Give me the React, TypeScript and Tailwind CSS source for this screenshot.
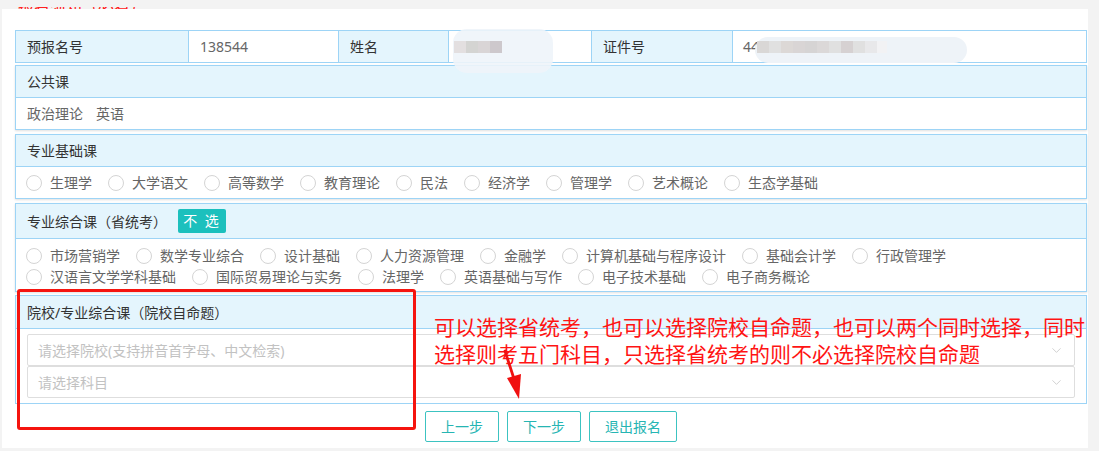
import { ChevronDown } from 'lucide-react';

const basics = ['生理学', '大学语文', '高等数学', '教育理论', '民法', '经济学', '管理学', '艺术概论', '生态学基础'];
const unified = [
    '市场营销学', '数学专业综合', '设计基础', '人力资源管理', '金融学', '计算机基础与程序设计', '基础会计学', '行政管理学',
    '汉语言文学学科基础', '国际贸易理论与实务', '法理学', '英语基础与写作', '电子技术基础', '电子商务概论',
];

function Radio({ label }: { label: string }) {
    return (
        <label className="flex items-center mr-[16px] leading-[21px]">
            <span className="w-[16px] h-[16px] rounded-full border border-[#d4d4d4] bg-white mr-[8px] shrink-0" />
            <span className="text-[#666]">{label}</span>
        </label>
    );
}

function Select({ placeholder }: { placeholder: string }) {
    return (
        <div className="h-[32px] border border-[#dedede] rounded-[2px] bg-white flex items-center justify-between pl-[10px] pr-[10px]">
            <span className="text-[#c2c2c2]">{placeholder}</span>
            <ChevronDown size={15} strokeWidth={1.3} className="text-[#c6c6c6]" />
        </div>
    );
}

export default function App() {
    return (
        <div className="w-[1099px] h-[451px] bg-[#f3f3f3] overflow-hidden text-[14px] text-[#333] font-['Noto_Sans','Noto_Sans_CJK_SC',sans-serif]">
            {/* clipped title line */}
            <div className="relative h-0">
                <div className="absolute left-[18px] top-[7px] h-[5px] overflow-hidden">
                    <div className="-mt-[11px] text-[16px] leading-[20px] text-[#ff2020] whitespace-nowrap">报名须知（必看）</div>
                </div>
            </div>

            <div className="relative mt-[9px] ml-[2px] w-[1086px] h-[439px] bg-white pl-[13px] pr-[1px] pt-[21px]">
                {/* info row */}
                <div className="flex h-[33px] border border-[#9dd4f6]">
                    <div className="w-[173px] bg-[#e4f5fd] border-r border-[#9dd4f6] flex items-center pl-[11px]">预报名号</div>
                    <div className="w-[150px] border-r border-[#9dd4f6] flex items-center pl-[11px] text-[#666]">138544</div>
                    <div className="w-[110px] bg-[#e4f5fd] border-r border-[#9dd4f6] flex items-center pl-[11px]">姓名</div>
                    <div className="w-[143px] border-r border-[#9dd4f6]" />
                    <div className="w-[141px] bg-[#e4f5fd] border-r border-[#9dd4f6] flex items-center pl-[11px]">证件号</div>
                    <div className="flex-1 flex items-center pl-[10px] text-[#666]">44</div>
                </div>

                {/* 公共课 */}
                <div className="mt-[2px] border border-[#9dd4f6] shadow-[0_1px_2px_rgba(0,0,0,0.12)]">
                    <div className="h-[32px] bg-[#e4f5fd] border-b border-[#9dd4f6] flex items-center pl-[11px]">公共课</div>
                    <div className="h-[31px] flex items-center pl-[11px] gap-[13px] text-[#666]">
                        <span>政治理论</span>
                        <span>英语</span>
                    </div>
                </div>

                {/* 专业基础课 */}
                <div className="mt-[4px] border border-[#9dd4f6] shadow-[0_1px_2px_rgba(0,0,0,0.12)]">
                    <div className="h-[32px] bg-[#e4f5fd] border-b border-[#9dd4f6] flex items-center pl-[11px]">专业基础课</div>
                    <div className="h-[31px] flex items-center pl-[10px]">
                        {basics.map((b) => (
                            <Radio key={b} label={b} />
                        ))}
                    </div>
                </div>

                {/* 专业综合课（省统考） */}
                <div className="mt-[4px] border border-[#9dd4f6] shadow-[0_1px_2px_rgba(0,0,0,0.12)]">
                    <div className="h-[35px] bg-[#e4f5fd] border-b border-[#9dd4f6] flex items-center pl-[11px]">
                        <span>专业综合课（省统考）</span>
                        <button className="ml-[11px] w-[48px] h-[24px] rounded-[2px] bg-[#1cc0bd] text-white text-[14px] leading-[24px] tracking-[2px]">不 选</button>
                    </div>
                    <div className="h-[52px] flex flex-wrap content-start pl-[10px] pr-[10px] pt-[6px]">
                        {unified.map((u) => (
                            <Radio key={u} label={u} />
                        ))}
                    </div>
                </div>

                {/* 院校/专业综合课（院校自命题） */}
                <div className="mt-[3px] border border-[#9dd4f6]">
                    <div className="h-[33px] bg-[#e4f5fd] border-b border-[#9dd4f6] flex items-center pl-[11px]">院校/专业综合课（院校自命题）</div>
                    <div className="pl-[11px] pr-[11px] pt-[5px] pb-[5px]">
                        <Select placeholder="请选择院校(支持拼音首字母、中文检索)" />
                        <Select placeholder="请选择科目" />
                    </div>
                </div>

                {/* buttons */}
                <div className="mt-[7px] flex justify-center gap-[8px] text-[#26b5b3]">
                    <button className="w-[74px] h-[31px] border border-[#3cc3c1] rounded-[2px] bg-white">上一步</button>
                    <button className="w-[74px] h-[31px] border border-[#3cc3c1] rounded-[2px] bg-white">下一步</button>
                    <button className="w-[88px] h-[31px] border border-[#3cc3c1] rounded-[2px] bg-white">退出报名</button>
                </div>

                {/* blurred personal data */}
                <div className="absolute left-[451px] top-[20px] w-[100px] h-[44px] rounded-[14px] bg-[#eef4f9] opacity-90" />
                <div className="absolute left-[452px] top-[32px] flex h-[12px]">
                    <div className="w-[12px] bg-[#e3dfe0]" />
                    <div className="w-[12px] bg-[#d4d4d2]" />
                    <div className="w-[12px] bg-[#d9d5d6]" />
                    <div className="w-[12px] bg-[#cdc8cc]" />
                </div>
                <div className="absolute left-[753px] top-[28px] w-[212px] h-[26px] rounded-full bg-[#eef3f8]" />
                <div className="absolute left-[755px] top-[32px] flex h-[12px]">
                    <div className="w-[12px] bg-[#d9d7d6]" />
                    <div className="w-[12px] bg-[#e0e0e0]" />
                    <div className="w-[12px] bg-[#dcd8d6]" />
                    <div className="w-[12px] bg-[#d9d5d5]" />
                    <div className="w-[12px] bg-[#d6d4d4]" />
                    <div className="w-[12px] bg-[#dbd8d8]" />
                    <div className="w-[12px] bg-[#e0e0e0]" />
                    <div className="w-[12px] bg-[#d6d1d2]" />
                    <div className="w-[12px] bg-[#e0e0e0]" />
                    <div className="w-[12px] bg-[#e8e8ea]" />
                    <div className="w-[10px] bg-[#f2f2f4]" />
                </div>

                {/* annotation overlay */}
                <div className="absolute left-[15px] top-[280px] w-[399px] h-[141px] border-[3px] border-[#f5140f] rounded-[3px]" />
                <div className="absolute left-[432px] top-[305px] text-[21px] leading-[27px] text-[#ff1414] whitespace-nowrap">
                    <div>可以选择省统考，也可以选择院校自命题，也可以两个同时选择，同时</div>
                    <div>选择则考五门科目，只选择省统考的则不必选择院校自命题</div>
                </div>
                <svg className="absolute left-[496px] top-[339px]" width="30" height="54" viewBox="0 0 30 54">
                    <path d="M7 3 L17 34" stroke="#f01010" strokeWidth="2.8" strokeLinecap="round" />
                    <path d="M9 30 L23 26 L21 51 Z" fill="#f01010" />
                </svg>
            </div>
        </div>
    );
}
